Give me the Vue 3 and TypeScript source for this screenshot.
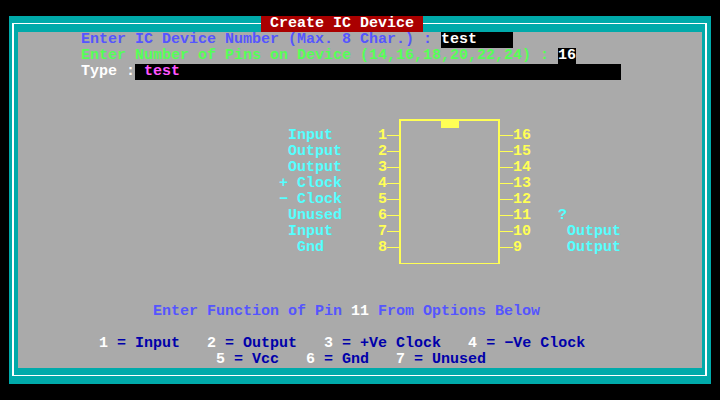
<script setup lang="ts">
interface Pin { label: string; num: string }
interface Option { key: string; text: string }
const leftPins: Pin[] = [
  { label: ' Input', num: '1' },
  { label: ' Output', num: '2' },
  { label: ' Output', num: '3' },
  { label: '+ Clock', num: '4' },
  { label: '\u2212 Clock', num: '5' },
  { label: ' Unused', num: '6' },
  { label: ' Input', num: '7' },
  { label: '  Gnd', num: '8' },
]
const rightPins: Pin[] = [
  { label: '', num: '16' },
  { label: '', num: '15' },
  { label: '', num: '14' },
  { label: '', num: '13' },
  { label: '', num: '12' },
  { label: '?', num: '11' },
  { label: ' Output', num: '10' },
  { label: ' Output', num: '9' },
]
const optionsA: Option[] = [
  { key: '1', text: ' = Input' },
  { key: '2', text: ' = Output' },
  { key: '3', text: ' = +Ve Clock' },
  { key: '4', text: ' = \u2212Ve Clock' },
]
const optionsB: Option[] = [
  { key: '5', text: ' = Vcc' },
  { key: '6', text: ' = Gnd' },
  { key: '7', text: ' = Unused' },
]
</script>

<template>
  <div class="screen">
    <div class="frame">
      <div class="title">Create IC Device</div>
      <div class="rule">
        <div class="inset">
          <div class="panel">
            <div class="row prompt"><span class="blue">Enter IC Device Number (Max. 8 Char.) : </span><span class="field number">test</span></div>
            <div class="row prompt"><span class="green">Enter Number of Pins on Device (14,16,18,20,22,24) : </span><span class="field pins">16</span></div>
            <div class="row prompt"><span class="white">Type :</span><span class="field type"> test</span></div>

            <div class="diagram">
              <div class="side">
                <div v-for="p in leftPins" :key="p.num" class="pin">
                  <span class="label left-label">{{ p.label }}</span>
                  <span class="num">{{ p.num }}</span>
                  <span class="lead left-lead"></span>
                </div>
              </div>
              <div class="chip"><span class="notch"></span></div>
              <div class="side">
                <div v-for="p in rightPins" :key="p.num" class="pin">
                  <span class="lead right-lead"></span>
                  <span class="num right-num">{{ p.num }}</span>
                  <span class="label">{{ p.label }}</span>
                </div>
              </div>
            </div>

            <div class="row question"><span class="blue">Enter Function of Pin </span><span class="white">11</span><span class="blue"> From Options Below</span></div>
            <div class="row options first">
              <span v-for="o in optionsA" :key="o.key"><b>{{ o.key }}</b>{{ o.text }}</span>
            </div>
            <div class="row options second">
              <span v-for="o in optionsB" :key="o.key"><b>{{ o.key }}</b>{{ o.text }}</span>
            </div>
          </div>
        </div>
      </div>
    </div>
  </div>
</template>

<style>
html, body { margin: 0; background: #000; }
</style>

<style scoped>
.screen {
  width: 720px;
  height: 400px;
  box-sizing: border-box;
  padding: 16px 9px;
  background: #000;
  overflow: hidden;
  font: bold 15px/16px "Liberation Mono", monospace;
}
.frame {
  position: relative;
  height: 368px;
  box-sizing: border-box;
  padding: 7px 4px 8px 3px;
  background: #00aaaa;
}
.title {
  position: absolute;
  top: 0;
  left: 252px;
  width: 153px;
  height: 16px;
  padding-left: 9px;
  background: #aa0000;
  color: #fff;
}
.rule {
  height: 100%;
  box-sizing: border-box;
  border: solid #fff;
  border-width: 1px 2px;
}
.inset {
  height: 100%;
  box-sizing: border-box;
  padding: 8px 3px 7px 4px;
}
.panel {
  height: 336px;
  background: #aaaaaa;
}
.row {
  height: 16px;
  white-space: pre;
}
.prompt { display: flex; padding-left: 63px; }
.blue { color: #5555ff; }
.green { color: #55ff55; }
.white { color: #fff; }
.field { display: block; background: #000; }
.number { width: 72px; color: #fff; }
.pins { width: 18px; color: #fff; }
.type { width: 486px; color: #ff55ff; }

.diagram {
  display: flex;
  height: 145px;
  margin-top: 39px;
  padding-left: 261px;
}
.side { padding-top: 9px; }
.pin {
  display: flex;
  height: 16px;
  white-space: pre;
  color: #ffff55;
}
.label { color: #55ffff; }
.left-label { width: 99px; }
.num { width: 9px; }
.right-num { width: 45px; }
.lead {
  height: 1px;
  margin-top: 7px;
  background: #ffff55;
}
.left-lead { width: 12px; }
.right-lead { width: 13px; }
.chip {
  display: flex;
  justify-content: center;
  width: 101px;
  height: 145px;
  box-sizing: border-box;
  border: solid #ffff55;
  border-width: 2px 2px 1px;
}
.notch {
  width: 18px;
  height: 7px;
  background: #ffff55;
}
.question { margin-top: 40px; padding-left: 135px; }
.options { display: flex; gap: 27px; color: #0000aa; }
.options b { color: #fff; font-weight: bold; }
.first { margin-top: 16px; padding-left: 81px; }
.second { padding-left: 198px; }
</style>
